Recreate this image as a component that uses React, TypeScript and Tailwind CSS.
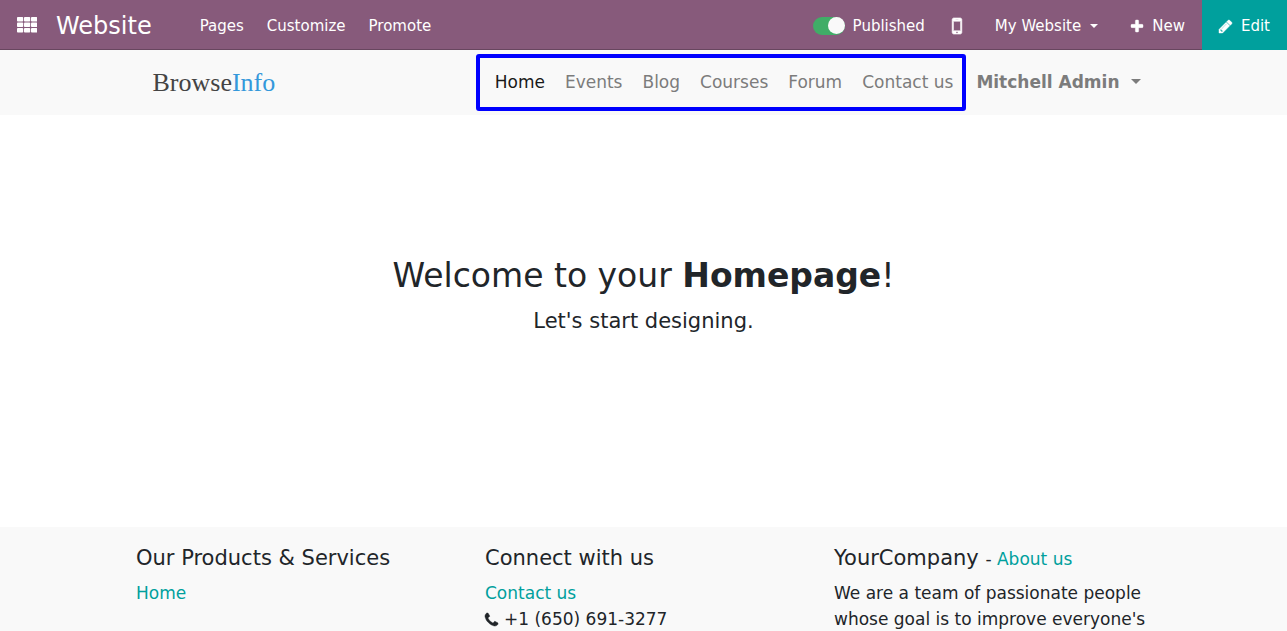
import { useState } from "react";

type IconProps = { d: string; viewBox: string; className?: string };

function Icon({ d, viewBox, className }: IconProps) {
  return (
    <svg
      viewBox={viewBox}
      fill="currentColor"
      stroke="currentColor"
      strokeWidth="50"
      overflow="visible"
      aria-hidden="true"
      className={className}
    >
      <path d={d} />
    </svg>
  );
}

const mobilePath =
  "M976 1408q0-33-23.5-56.5t-56.5-23.5-56.5 23.5-23.5 56.5 23.5 56.5 56.5 23.5 56.5-23.5 23.5-56.5zm208-160v-704q0-13-9.5-22.5t-22.5-9.5h-512q-13 0-22.5 9.5t-9.5 22.5v704q0 13 9.5 22.5t22.5 9.5h512q13 0 22.5-9.5t9.5-22.5zm-192-848q0-16-16-16h-160q-16 0-16 16t16 16h160q16 0 16-16zm288-16v1024q0 52-38 90t-90 38h-512q-52 0-90-38t-38-90v-1024q0-52 38-90t90-38h512q52 0 90 38t38 90z";
const plusPath =
  "M1600 736v192q0 40-28 68t-68 28h-416v416q0 40-28 68t-68 28h-192q-40 0-68-28t-28-68v-416h-416q-40 0-68-28t-28-68v-192q0-40 28-68t68-28h416v-416q0-40 28-68t68-28h192q40 0 68 28t28 68v416h416q40 0 68 28t28 68z";
const pencilPath =
  "M491 1536l91-91-235-235-91 91v107h128v128h107zm523-928q0-22-22-22-10 0-17 7l-542 542q-7 7-7 17 0 22 22 22 10 0 17-7l542-542q7-7 7-17zm-54-192l416 416-832 832h-416v-416zm683 96q0 53-37 90l-166 166-416-416 166-165q36-38 90-38 53 0 91 38l235 234q37 39 37 91z";
const phonePath =
  "M1600 1240q0 27-10 70.5t-21 68.5q-21 50-122 106-94 51-186 51-27 0-53-3.5t-57.5-12.5-47-14.5-55.5-20.5-49-18q-98-35-175-83-127-79-264-216t-216-264q-48-77-83-175-3-9-18-49t-20.5-55.5-14.5-47-12.5-57.5-3.5-53q0-92 51-186 56-101 106-122 25-11 68.5-21t70.5-10q14 0 21 3 18 6 53 76 11 19 30 54t35 63.5 31 53.5q3 4 17.5 25t21.5 35.5 7 28.5q0 20-28.5 50t-62 55-62 53-28.5 46q0 9 5 22.5t8.5 20.5 14 24 11.5 19q76 137 174 235t235 174q2 1 19 11.5t24 14 20.5 8.5 22.5 5q18 0 46-28.5t53-62 55-62 50-28.5q14 0 28.5 7t35.5 21.5 25 17.5q25 15 53.5 31t63.5 35 54 30q70 35 76 53 3 7 3 21z";

function GridIcon() {
  return (
    <svg viewBox="0 0 20 16" fill="currentColor" aria-hidden="true" className="h-4 w-5">
      {[0, 5.5, 11].map((y) =>
        [0, 7, 14].map((x) => <rect key={`${x}-${y}`} x={x} y={y} width="6.2" height="4.6" rx="0.8" />),
      )}
    </svg>
  );
}

function Caret({ className }: { className?: string }) {
  return (
    <svg viewBox="0 0 10 5" fill="currentColor" aria-hidden="true" className={className}>
      <path d="M0 0h10L5 5z" />
    </svg>
  );
}

const menu = ["Home", "Events", "Blog", "Courses", "Forum", "Contact us"];

export default function App() {
  const [published, setPublished] = useState(true);
  return (
    <div className="flex h-screen flex-col overflow-hidden bg-white font-['DejaVu_Sans',sans-serif] text-[17px] leading-[26px] text-[#212529]">
      <header className="flex h-[50px] shrink-0 items-stretch bg-[#875a7b] text-[15px] text-white">
        <div className="flex grow items-center border-b border-[#68465f] pt-0.5">
          <button type="button" aria-label="Applications" className="ml-[17px] mr-[19px] pb-0.5">
            <GridIcon />
          </button>
          <a href="#" className="mr-12 text-[24px]">Website</a>
          <nav className="flex gap-[23px]">
            <a href="#pages">Pages</a>
            <a href="#customize">Customize</a>
            <a href="#promote">Promote</a>
          </nav>
          <div className="ml-auto flex items-center">
            <label className="flex cursor-pointer items-center gap-2">
              <input
                type="checkbox"
                checked={published}
                onChange={() => setPublished(!published)}
                className="peer sr-only"
              />
              <span className="flex h-[18px] w-8 items-center justify-start rounded-full bg-[#9a9a9a] peer-checked:justify-end peer-checked:bg-[#40ad67]">
                <span className="size-[17px] rounded-full bg-[#f9f9f9]" />
              </span>
              Published
            </label>
            <button type="button" aria-label="Mobile preview" className="ml-[27px]">
              <Icon d={mobilePath} viewBox="512 256 768 1280" className="h-4 w-2.5" />
            </button>
            <button type="button" className="ml-[33px] flex items-center gap-[9px]">
              My Website
              <Caret className="h-1 w-2" />
            </button>
            <button type="button" className="ml-[33px] mr-[17px] flex items-center gap-[9px]">
              <Icon d={plusPath} viewBox="192 128 1408 1408" className="size-3" />
              New
            </button>
          </div>
        </div>
        <button type="button" className="flex items-center gap-[9px] bg-[#00a09d] px-[17px] pt-0.5">
          <Icon d={pencilPath} viewBox="128 149 1515 1515" className="size-[13px]" />
          Edit
        </button>
      </header>

      <div className="h-[65px] shrink-0 bg-[#f9f9f9]">
        <div className="mx-auto flex h-full max-w-[1048px] items-center justify-between pl-[33px] pr-[27px]">
          <a href="#home" className="font-['Liberation_Serif',serif] text-[26px] text-[#444]">
            Browse<span className="text-[#3498db]">Info</span>
          </a>
          <div className="flex items-center gap-2.5 text-[#7c7c7c]">
            <nav className="flex h-[57px] items-center gap-5 rounded-[3px] border-4 border-[#00f] pb-0.5 pl-[15px] pr-[9px]">
              {menu.map((item, i) => (
                <a key={item} href="#menu" className={i === 0 ? "text-[#191919]" : ""}>
                  {item}
                </a>
              ))}
            </nav>
            <button type="button" className="flex items-center gap-[11px] pb-0.5 font-bold">
              Mitchell Admin
              <Caret className="h-[5px] w-2.5" />
            </button>
          </div>
        </div>
      </div>

      <main className="flex grow flex-col items-center justify-center gap-[9px] pb-[51px] text-center">
        <h1 className="text-[33px] leading-[41px]">
          Welcome to your <b>Homepage</b>!
        </h1>
        <p className="text-[21px] leading-8">Let's start designing.</p>
      </main>

      <footer className="h-[104px] shrink-0 overflow-hidden bg-[#f9f9f9] pt-[18px]">
        <div className="mx-auto grid max-w-[1047px] grid-cols-3">
          <section className="px-4">
            <h2 className="mb-[9px] text-[21px]">Our Products &amp; Services</h2>
            <a href="#home" className="text-[#00a09d]">Home</a>
          </section>
          <section className="px-4">
            <h2 className="mb-[9px] text-[21px]">Connect with us</h2>
            <a href="#contact" className="text-[#00a09d]">Contact us</a>
            <p className="flex items-center gap-1.5">
              <Icon d={phonePath} viewBox="192 128 1408 1408" className="size-[13px]" />
              +1 (650) 691-3277
            </p>
          </section>
          <section className="px-4">
            <h2 className="mb-[9px] text-[21px]">
              YourCompany{" "}
              <small className="text-[17px] leading-none">
                - <a href="#about" className="text-[#00a09d]">About us</a>
              </small>
            </h2>
            <p>We are a team of passionate people whose goal is to improve everyone's</p>
          </section>
        </div>
      </footer>
    </div>
  );
}
